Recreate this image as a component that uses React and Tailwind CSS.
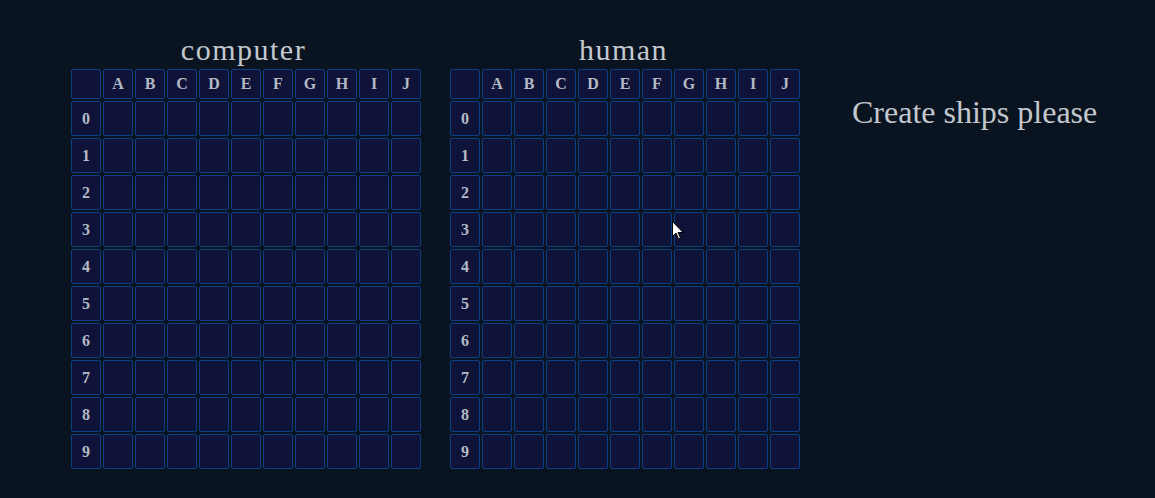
import React from "react";

const COLS = ["A", "B", "C", "D", "E", "F", "G", "H", "I", "J"];
const ROWS = [0, 1, 2, 3, 4, 5, 6, 7, 8, 9];

function Cell({ children }) {
  return (
    <div className="flex items-center justify-center rounded-[2px] border border-[#0b3f82] bg-[#0f1339] text-[16px] font-bold text-[#b4bac4] leading-none">
      {children}
    </div>
  );
}

function Board({ title, shift }) {
  return (
    <div className="flex flex-col">
      <div className={`text-center text-[30px] leading-[34px] tracking-[1.5px] text-[#c3c8cf] mb-[2px] ${shift}`}>
        {title}
      </div>
      <div className="grid grid-cols-[repeat(11,30px)] grid-rows-[30px_repeat(10,35px)] gap-[2px]">
        <Cell />
        {COLS.map((c) => (
          <Cell key={c}>{c}</Cell>
        ))}
        {ROWS.map((r) => (
          <React.Fragment key={r}>
            <Cell>{r}</Cell>
            {COLS.map((c) => (
              <Cell key={c} />
            ))}
          </React.Fragment>
        ))}
      </div>
    </div>
  );
}

export default function App() {
  return (
    <div
      className="relative w-[1155px] h-[498px] bg-[#0a1420] overflow-hidden"
      style={{ fontFamily: '"Liberation Serif", "Times New Roman", serif' }}
    >
      <div className="flex items-start pl-[71px] pt-[33px]">
        <Board title="computer" shift="pr-[5px]" />
        <div className="ml-[29px]">
          <Board title="human" shift="pr-[3px]" />
        </div>
        <div className="ml-[52px] mt-[61px] text-[32px] leading-[37px] text-[#c3c8cf]">
          Create ships please
        </div>
      </div>
      <svg
        className="absolute left-[672px] top-[221px]"
        width="13"
        height="20"
        viewBox="0 0 13 20"
      >
        <path
          d="M0.5 0.5 L0.5 15.5 L4 12 L6.5 18 L8.5 17 L6 11.5 L11 11.5 Z"
          fill="#ffffff"
          stroke="#000000"
          strokeWidth="1"
          strokeLinejoin="round"
        />
      </svg>
    </div>
  );
}
